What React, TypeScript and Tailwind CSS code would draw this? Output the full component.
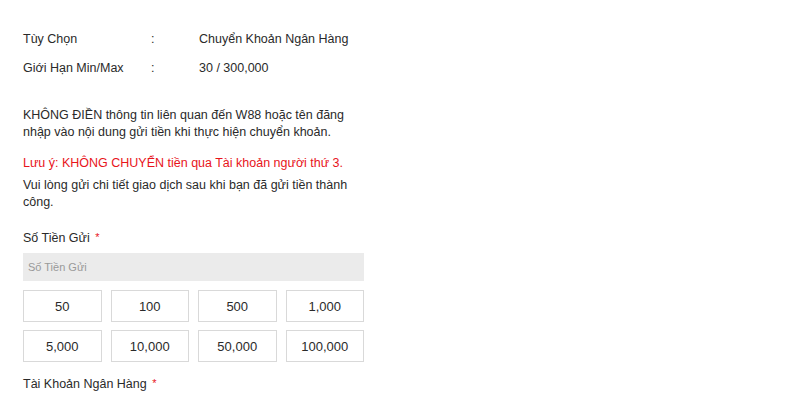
export default function App() {
  const amounts = ["50", "100", "500", "1,000", "5,000", "10,000", "50,000", "100,000"];

  return (
    <div className="w-[800px] h-[400px] bg-white overflow-hidden text-[12.5px] leading-[17px] text-[#2a2a2a] font-['Liberation_Sans',Arial,sans-serif]">
      <div className="w-[341px] ml-[23px] pt-[31px]">
        {/* ── Info rows ── */}
        <div className="flex h-[17px]">
          <span className="w-[128px]">Tùy Chọn</span>
          <span className="w-[48px]">:</span>
          <span>Chuyển Khoản Ngân Hàng</span>
        </div>
        <div className="flex h-[17px] mt-[12px]">
          <span className="w-[128px]">Giới Hạn Min/Max</span>
          <span className="w-[48px]">:</span>
          <span>30 / 300,000</span>
        </div>

        {/* ── Notes ── */}
        <p className="mt-[30px]">
          KHÔNG ĐIỀN thông tin liên quan đến W88 hoặc tên đăng nhập vào nội dung gửi tiền khi thực hiện chuyển khoản.
        </p>
        <p className="mt-[14px] text-[#e8141b]">Lưu ý: KHÔNG CHUYỂN tiền qua Tài khoản người thứ 3.</p>
        <p className="mt-[5px]">Vui lòng gửi chi tiết giao dịch sau khi bạn đã gửi tiền thành công.</p>

        {/* ── Amount ── */}
        <div className="mt-[18px]">
          Số Tiền Gửi <span className="ml-[2px] text-[11px] align-[1px] text-[#e8141b]">*</span>
        </div>
        <div className="mt-[6px] h-[28px] bg-[#ebebeb] flex items-center px-[5px] text-[11px] text-[#999]">
          Số Tiền Gửi
        </div>
        <div className="mt-[9px] grid grid-cols-4 gap-x-[9px] gap-y-[8px]">
          {amounts.map((a) => (
            <div
              key={a}
              className="h-[32px] border border-[#d9d9d9] flex items-center justify-center text-[13px] text-[#2a2a2a]"
            >
              {a}
            </div>
          ))}
        </div>

        <div className="mt-[13px]">
          Tài Khoản Ngân Hàng <span className="ml-[2px] text-[11px] align-[1px] text-[#e8141b]">*</span>
        </div>
      </div>
    </div>
  );
}
